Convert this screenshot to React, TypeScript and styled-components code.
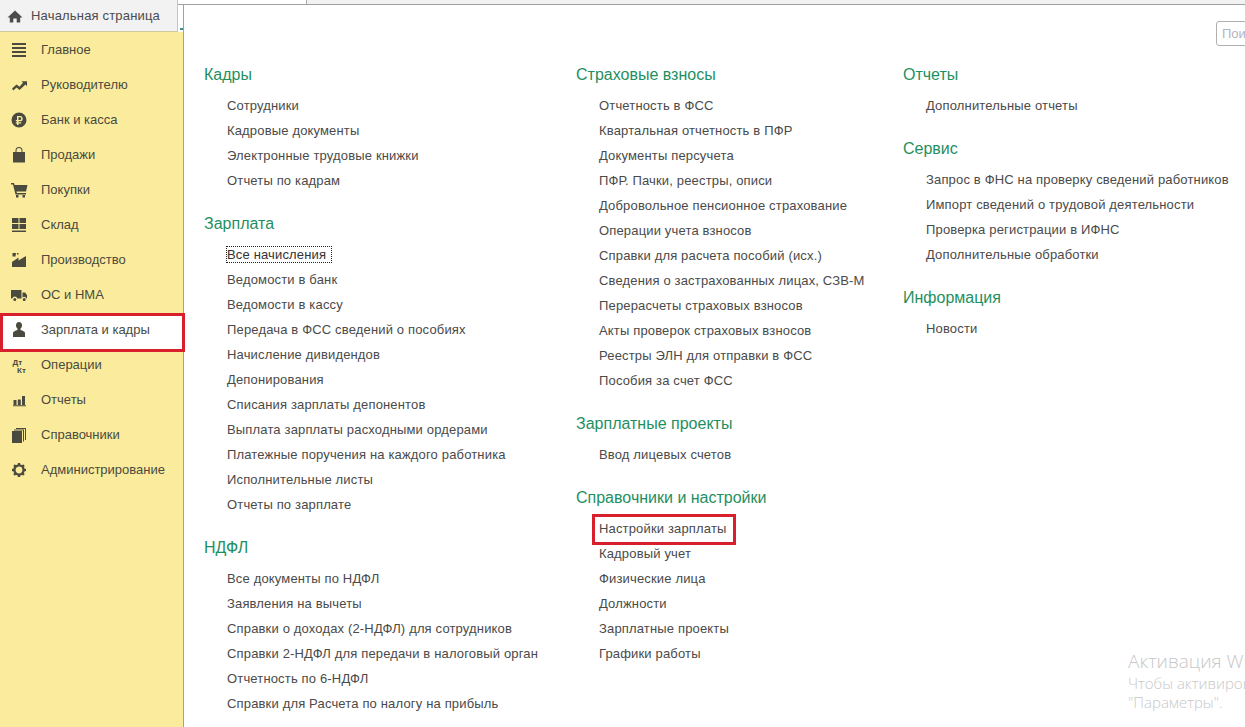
import React, { FC } from 'react'
import styled, { createGlobalStyle } from 'styled-components'

const GlobalStyle = createGlobalStyle`
  html, body {
    margin: 0;
    padding: 0;
    height: 100%;
    overflow: hidden;
    background: #fff;
  }
  body {
    font-family: "Liberation Sans", Arial, sans-serif;
  }
`

const StyledPage = styled.div`
  position: relative;
  width: 1245px;
  height: 727px;
  display: flex;
  overflow: hidden;
  background: #fff;
`
const StyledLeft = styled.div`
  width: 184px;
  flex-shrink: 0;
  display: flex;
  flex-direction: column;
`
const StyledTabRow = styled.div`
  height: 32px;
  flex-shrink: 0;
  display: flex;
`
const StyledHomeTab = styled.div`
  width: 178px;
  box-sizing: border-box;
  display: flex;
  align-items: center;
  gap: 8px;
  padding-left: 7px;
  background: #f2f2f2;
  border-right: 1px solid #c4c4c4;
  border-bottom: 1px solid #cfc9a0;
  font-size: 13px;
  color: #4b4b4b;
  letter-spacing: 0.18px;
`
const StyledTabGap = styled.div`
  position: relative;
  flex: 1;
  margin-top: 4px;
  border-right: 1px solid #a0a0a0;
  border-top: 1px solid #a0a0a0;
  margin-left: 0;
  &::after {
    content: "";
    position: absolute;
    right: 0;
    bottom: 2px;
    width: 3px;
    height: 2px;
    background: #3f8f80;
  }
`
const StyledSide = styled.div`
  flex: 1;
  box-sizing: border-box;
  background: #fbec9d;
  border-right: 1px solid #b0a468;
`
const StyledSideItem = styled.div<{ $active?: boolean }>`
  position: relative;
  height: 35px;
  display: flex;
  align-items: center;
  gap: 13px;
  padding-left: 11px;
  font-size: 13px;
  color: #4a4a3e;
  ${(p) => p.$active && `
    &::before {
      content: "";
      position: absolute;
      left: 0;
      top: 1px;
      width: 185px;
      height: 39px;
      box-sizing: border-box;
      background: #fff;
      border: 3px solid #d81f2c;
      z-index: 0;
    }
  `}
  > * {
    position: relative;
    z-index: 1;
  }
`
const StyledIcon = styled.svg`
  width: 17px;
  height: 17px;
  flex-shrink: 0;
  fill: #4a4a3e;
`
const StyledHomeIcon = styled.svg`
  width: 16px;
  height: 16px;
  flex-shrink: 0;
  fill: #4b4b4b;
`
const StyledMain = styled.div`
  position: relative;
  flex: 1;
  display: flex;
  flex-direction: column;
`
const StyledTopStrip = styled.div`
  height: 5px;
  flex-shrink: 0;
  box-sizing: border-box;
  background: #f2f2f2;
  border-bottom: 1px solid #a0a0a0;
`
const StyledStripBlank = styled.div`
  width: 123px;
  height: 100%;
  box-sizing: border-box;
  background: #fff;
  border-right: 1px solid #a8a8a8;
`
const StyledColumns = styled.div`
  display: flex;
  padding: 60px 0 0 20px;
`
const StyledColumn = styled.div<{ $width: number }>`
  width: ${(p) => p.$width}px;
  flex-shrink: 0;
  display: flex;
  flex-direction: column;
  gap: 21px;
`
const StyledGroup = styled.div`
  display: flex;
  flex-direction: column;
`
const StyledGroupTitle = styled.div`
  height: 19px;
  line-height: 19px;
  margin-bottom: 9px;
  font-size: 16px;
  color: #1f8f5f;
  white-space: nowrap;
`
const StyledLink = styled.div<{ $focused?: boolean; $marked?: boolean }>`
  position: relative;
  height: 25px;
  line-height: 25px;
  padding-left: 23px;
  font-size: 13px;
  letter-spacing: 0.16px;
  color: #4a4a4a;
  white-space: nowrap;
  ${(p) => p.$focused && `
    > span {
      outline: 1px dotted #222;
      display: inline-block;
      line-height: 15px;
      padding-right: 5px;
      color: #333;
    }
  `}
  ${(p) => p.$marked && `
    &::after {
      content: "";
      position: absolute;
      left: 16px;
      top: -2px;
      width: 144px;
      height: 31px;
      box-sizing: border-box;
      border: 3px solid #d81f2c;
    }
  `}
`
const StyledSearch = styled.div`
  position: absolute;
  left: 1032px;
  top: 21px;
  width: 80px;
  height: 25px;
  box-sizing: border-box;
  border: 1px solid #b0b0b0;
  border-radius: 3px;
  padding-left: 5px;
  line-height: 23px;
  font-size: 13px;
  color: #b4b4c0;
  background: #fff;
`
const StyledWatermark = styled.div`
  position: absolute;
  left: 1128px;
  top: 649px;
  width: 117px;
  font-family: "Open Sans", "Noto Sans", sans-serif;
  color: #c8c8c8;
  white-space: nowrap;
  overflow: hidden;
`
const StyledWatermarkTitle = styled.div`
  font-size: 19px;
  font-weight: 300;
  line-height: 25px;
`
const StyledWatermarkText = styled.div`
  font-size: 15px;
  font-weight: 300;
  line-height: 19px;
`

const icons: Record<string, React.ReactNode> = {
  menu: <path d="M1 2h14v2H1zM1 6h14v2H1zM1 10h14v2H1zM1 14h14v2H1z" />,
  trend: <path d="M1 12.500l4.500-4 3 2.300L12 6.800 10.500 5.200h5.500v5l-1.600-1.600-5.800 5.400-3-2.400-3.300 2.900z" />,
  ruble: <path fillRule="evenodd" d="M8 1.500a7.500 7.500 0 1 1 0 15 7.500 7.500 0 0 1 0-15zM6 5v4H4.800v1.300H6v.9H4.800v1.300H6V14h1.500v-1.500h2.700v-1.300H7.500v-.9H9a2.650 2.650 0 0 0 0-5.300zM7.500 6.300h1.400a1.350 1.350 0 0 1 0 2.700H7.500z" />,
  bag: <path fillRule="evenodd" d="M2 6h2.500V4.500a3.500 3.500 0 0 1 7 0V6H14v10.500H2zM5.500 6h5V4.500a2.500 2.500 0 0 0-5 0z" />,
  cart: <path d="M0 2h3l.6 2H16.500L15 10.500H5.500l.4 1.500h9.100v1.500H4.500L2 3.500H0zM5 14h2.500v2.500H5zM11.500 14H14v2.500h-2.500z" />,
  grid: <path d="M1 2h6.500v5H1zM8.500 2H15v5H8.500zM1 8h6.500v5H1zM8.500 8H15v5H8.500zM1 14.500h14V16H1z" />,
  factory: <path d="M1.500 2H5l-.5 3.500h-3zM6 2h1.500v1.500H6zM1 11l6.500-4.500v3L15 5v11H1z" />,
  truck: <path fillRule="evenodd" d="M0 4h10.500v8.500H6.300a2.600 2.600 0 0 0-5 0H0zM11.500 6.500H14l2 2.500v3.500h-.4a2.600 2.600 0 0 0-4.100-1zM3.800 12a1.500 1.500 0 1 1 0 3 1.500 1.500 0 0 1 0-3zM13.200 12a1.500 1.500 0 1 1 0 3 1.500 1.500 0 0 1 0-3z" />,
  person: <path d="M8 1c1.900 0 3 1.500 3 3.300 0 1.500-.6 2.800-1.500 3.500v1.300c2.200.5 4.500 1.500 4.500 3V16H2v-3.900c0-1.500 2.300-2.500 4.500-3V7.800C5.600 7.100 5 5.800 5 4.300 5 2.500 6.100 1 8 1z" />,
  bars: <path d="M2.500 9H5.500v5h-3zM6.800 8.500h3V14h-3zM11 5h3v9h-3zM2 14.300h13v1H2z" />,
  books: <path d="M1 5h10v12H1zM3 3.500h10v12h-1V4.500H3zM5 2h10v12h-1V3H5z" />,
}

const gearTeeth = [0, 45, 90, 135, 180, 225, 270, 315]

const GearIcon: FC = () => (
  <StyledIcon viewBox="0 0 17 17">
    <circle cx="8" cy="9" r="4.600" fill="none" stroke="#4a4a3e" strokeWidth="2.400" />
    {gearTeeth.map((angle) => (
      <rect key={angle} x="6.800" y="2" width="2.400" height="2.400" transform={`rotate(${angle} 8 9)`} />
    ))}
  </StyledIcon>
)

const DtKtIcon: FC = () => (
  <StyledIcon viewBox="0 0 17 17">
    <text x="1.500" y="8.500" fontSize="8" fontWeight="700" fontFamily="Liberation Sans, sans-serif">Дт</text>
    <text x="6" y="16.500" fontSize="8" fontWeight="700" fontFamily="Liberation Sans, sans-serif">Кт</text>
  </StyledIcon>
)

const sideItems: { label: string; icon: string; active?: boolean }[] = [
  { label: 'Главное', icon: 'menu' },
  { label: 'Руководителю', icon: 'trend' },
  { label: 'Банк и касса', icon: 'ruble' },
  { label: 'Продажи', icon: 'bag' },
  { label: 'Покупки', icon: 'cart' },
  { label: 'Склад', icon: 'grid' },
  { label: 'Производство', icon: 'factory' },
  { label: 'ОС и НМА', icon: 'truck' },
  { label: 'Зарплата и кадры', icon: 'person', active: true },
  { label: 'Операции', icon: 'dtkt' },
  { label: 'Отчеты', icon: 'bars' },
  { label: 'Справочники', icon: 'books' },
  { label: 'Администрирование', icon: 'gear' },
]

type Group = { title: string; links: string[] }

const columns: { width: number; groups: Group[] }[] = [
  {
    width: 372,
    groups: [
      { title: 'Кадры', links: ['Сотрудники', 'Кадровые документы', 'Электронные трудовые книжки', 'Отчеты по кадрам'] },
      {
        title: 'Зарплата',
        links: [
          'Все начисления',
          'Ведомости в банк',
          'Ведомости в кассу',
          'Передача в ФСС сведений о пособиях',
          'Начисление дивидендов',
          'Депонирования',
          'Списания зарплаты депонентов',
          'Выплата зарплаты расходными ордерами',
          'Платежные поручения на каждого работника',
          'Исполнительные листы',
          'Отчеты по зарплате',
        ],
      },
      {
        title: 'НДФЛ',
        links: [
          'Все документы по НДФЛ',
          'Заявления на вычеты',
          'Справки о доходах (2-НДФЛ) для сотрудников',
          'Справки 2-НДФЛ для передачи в налоговый орган',
          'Отчетность по 6-НДФЛ',
          'Справки для Расчета по налогу на прибыль',
        ],
      },
    ],
  },
  {
    width: 327,
    groups: [
      {
        title: 'Страховые взносы',
        links: [
          'Отчетность в ФСС',
          'Квартальная отчетность в ПФР',
          'Документы персучета',
          'ПФР. Пачки, реестры, описи',
          'Добровольное пенсионное страхование',
          'Операции учета взносов',
          'Справки для расчета пособий (исх.)',
          'Сведения о застрахованных лицах, СЗВ-М',
          'Перерасчеты страховых взносов',
          'Акты проверок страховых взносов',
          'Реестры ЭЛН для отправки в ФСС',
          'Пособия за счет ФСС',
        ],
      },
      { title: 'Зарплатные проекты', links: ['Ввод лицевых счетов'] },
      {
        title: 'Справочники и настройки',
        links: ['Настройки зарплаты', 'Кадровый учет', 'Физические лица', 'Должности', 'Зарплатные проекты', 'Графики работы'],
      },
    ],
  },
  {
    width: 320,
    groups: [
      { title: 'Отчеты', links: ['Дополнительные отчеты'] },
      {
        title: 'Сервис',
        links: [
          'Запрос в ФНС на проверку сведений работников',
          'Импорт сведений о трудовой деятельности',
          'Проверка регистрации в ИФНС',
          'Дополнительные обработки',
        ],
      },
      { title: 'Информация', links: ['Новости'] },
    ],
  },
]

const SideIcon: FC<{ name: string }> = ({ name }) => {
  if (name === 'dtkt') return <DtKtIcon />
  if (name === 'gear') return <GearIcon />
  return <StyledIcon viewBox="0 0 17 17">{icons[name]}</StyledIcon>
}

const App: FC = () => {
  return (
    <StyledPage>
      <GlobalStyle />
      <StyledLeft>
        <StyledTabRow>
          <StyledHomeTab>
            <StyledHomeIcon viewBox="0 0 16 16">
              <path d="M8 2.500L15.500 9.500H13.200V14.500H9.700V10.500H6.300V14.500H2.800V9.500H.5z" />
            </StyledHomeIcon>
            <span>Начальная страница</span>
          </StyledHomeTab>
          <StyledTabGap />
        </StyledTabRow>
        <StyledSide>
          {sideItems.map((item) => (
            <StyledSideItem key={item.label} $active={item.active}>
              <SideIcon name={item.icon} />
              <span>{item.label}</span>
            </StyledSideItem>
          ))}
        </StyledSide>
      </StyledLeft>
      <StyledMain>
        <StyledTopStrip>
          <StyledStripBlank />
        </StyledTopStrip>
        <StyledColumns>
          {columns.map((column) => (
            <StyledColumn key={column.groups[0].title} $width={column.width}>
              {column.groups.map((group) => (
                <StyledGroup key={group.title}>
                  <StyledGroupTitle>{group.title}</StyledGroupTitle>
                  {group.links.map((link) => (
                    <StyledLink key={link} $focused={link === 'Все начисления'} $marked={link === 'Настройки зарплаты'}>
                      <span>{link}</span>
                    </StyledLink>
                  ))}
                </StyledGroup>
              ))}
            </StyledColumn>
          ))}
        </StyledColumns>
        <StyledSearch>Поиск</StyledSearch>
      </StyledMain>
      <StyledWatermark>
        <StyledWatermarkTitle>Активация Windows</StyledWatermarkTitle>
        <StyledWatermarkText>Чтобы активировать Windows, перейдите в раздел</StyledWatermarkText>
        <StyledWatermarkText>"Параметры".</StyledWatermarkText>
      </StyledWatermark>
    </StyledPage>
  )
}

export default App
